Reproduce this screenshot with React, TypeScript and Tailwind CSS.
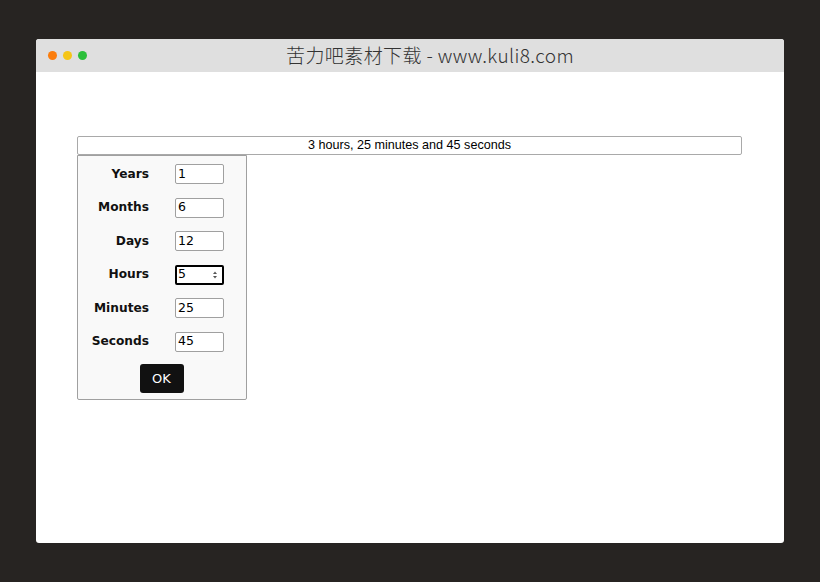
import { useState } from 'react';

const fields = [
  { label: 'Years', value: '1' },
  { label: 'Months', value: '6' },
  { label: 'Days', value: '12' },
  { label: 'Hours', value: '5', focused: true },
  { label: 'Minutes', value: '25' },
  { label: 'Seconds', value: '45' },
];

const Spinner = () => (
  <svg width="6" height="10" viewBox="0 0 6 10" className="text-[#555]">
    <path d="M1 4 L3 1.5 L5 4 Z" fill="currentColor" />
    <path d="M1 6 L3 8.5 L5 6 Z" fill="currentColor" />
  </svg>
);

const App = () => {
  const [values] = useState(fields);

  return (
    <div className="w-[820px] h-[582px] bg-[#272422] pt-[39px] pl-[36px]">
      <div className="w-[748px] h-[504px] bg-white rounded-[3px] overflow-hidden flex flex-col">
        <div className="relative h-[33px] bg-[#dfdfdf] flex items-center justify-center">
          <div className="absolute left-[12px] top-[12px] flex gap-[6px]">
            <div className="w-[9px] h-[9px] rounded-full bg-[#fb7d0d]" />
            <div className="w-[9px] h-[9px] rounded-full bg-[#f5c517]" />
            <div className="w-[9px] h-[9px] rounded-full bg-[#2bbf3a]" />
          </div>
          <div
            className="text-[19px] font-light text-[#333] ml-[40px] mb-[3px] leading-none tracking-[0.4px]"
            style={{ fontFamily: '"Noto Sans CJK SC", sans-serif' }}
          >
            苦力吧素材下载 - www.kuli8.com
          </div>
        </div>
        <div className="pt-[64px] pl-[41px] pr-[42px]">
          <div
            className="h-[19px] border border-[#a9a9a9] rounded-[2px] flex items-center justify-center text-[12.6px] text-black"
            style={{ fontFamily: '"Liberation Sans", Arial, sans-serif' }}
          >
            3 hours, 25 minutes and 45 seconds
          </div>
          <div
            className="w-[170px] bg-[#f9f9f9] border border-[#a0a0a0] rounded-b-[2px] pt-[8px] pb-[6px] flex flex-col items-start gap-[13.5px]"
            style={{ fontFamily: '"DejaVu Sans", Verdana, sans-serif' }}
          >
            {values.map(f => (
              <div key={f.label} className="flex items-center h-[20px]">
                <div className="w-[71px] text-right text-[12.2px] font-bold text-[#111]">
                  {f.label}
                </div>
                {f.focused ? (
                  <div className="ml-[26px] w-[49px] h-[20px] border-2 border-black rounded-[2px] bg-white flex items-center justify-between pl-[1px] pr-[4px] text-[12.5px] text-black">
                    <span>{f.value}</span>
                    <Spinner />
                  </div>
                ) : (
                  <div className="ml-[26px] w-[49px] h-[20px] border border-[#a0a0a0] rounded-[2px] bg-white flex items-center pl-[2px] text-[12.5px] text-black">
                    {f.value}
                  </div>
                )}
              </div>
            ))}
            <div className="w-full flex justify-center -mt-[1px] pr-[1px]">
              <button className="w-[44px] h-[29px] bg-[#111] text-white text-[13px] rounded-[3px]">
                OK
              </button>
            </div>
          </div>
        </div>
      </div>
    </div>
  );
};

export default App;
